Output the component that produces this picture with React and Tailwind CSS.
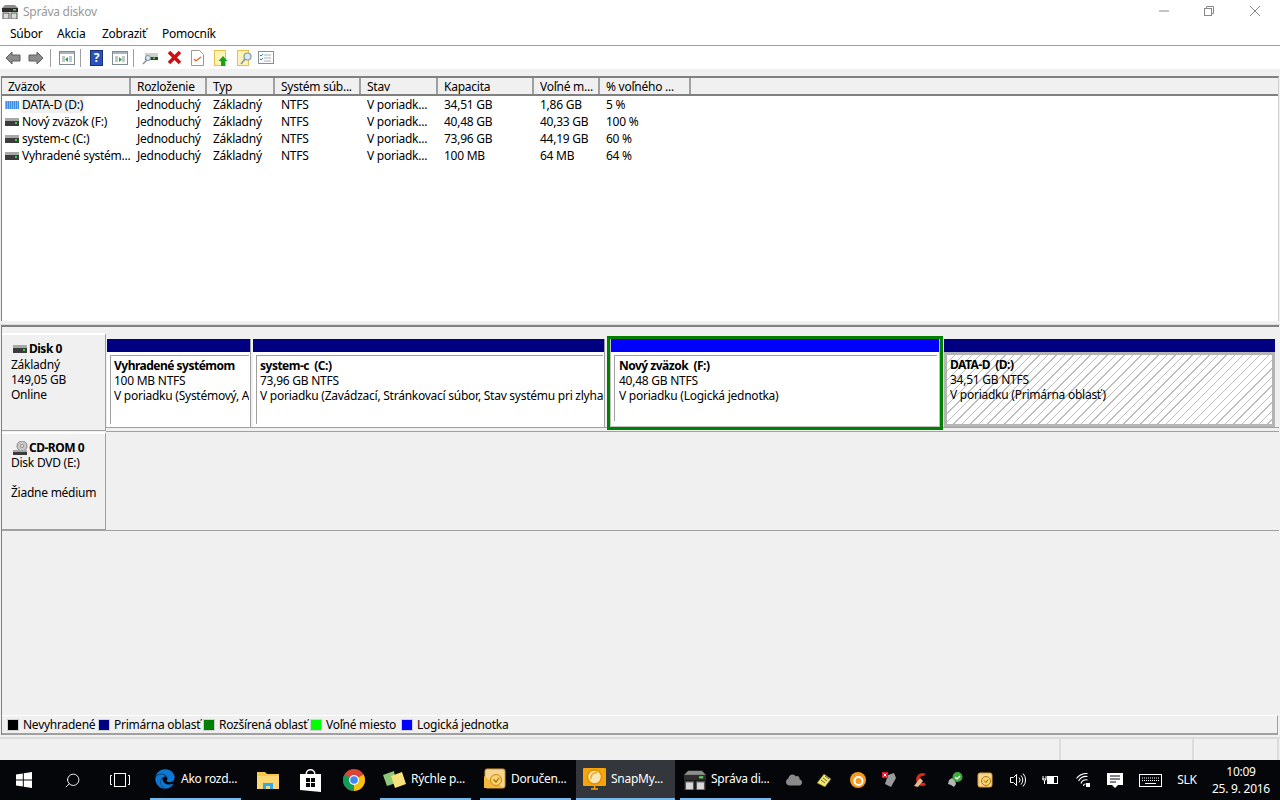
import React from 'react';
import { FaEdge, FaCloud } from 'react-icons/fa';
import { Search } from 'lucide-react';

const COLS = [
  { label: 'Zväzok', w: 'w-[129px]' },
  { label: 'Rozloženie', w: 'w-[76px]' },
  { label: 'Typ', w: 'w-[68px]' },
  { label: 'Systém súb...', w: 'w-[86px]' },
  { label: 'Stav', w: 'w-[77px]' },
  { label: 'Kapacita', w: 'w-[96px]' },
  { label: 'Voľné m...', w: 'w-[66px]' },
  { label: '% voľného ...', w: 'w-[91px]' },
];

const ROWS = [
  ['DATA-D (D:)', 'Jednoduchý', 'Základný', 'NTFS', 'V poriadk...', '34,51 GB', '1,86 GB', '5 %'],
  ['Nový zväzok (F:)', 'Jednoduchý', 'Základný', 'NTFS', 'V poriadk...', '40,48 GB', '40,33 GB', '100 %'],
  ['system-c (C:)', 'Jednoduchý', 'Základný', 'NTFS', 'V poriadk...', '73,96 GB', '44,19 GB', '60 %'],
  ['Vyhradené systém...', 'Jednoduchý', 'Základný', 'NTFS', 'V poriadk...', '100 MB', '64 MB', '64 %'],
];

const LEGEND = [
  { color: 'bg-black', label: 'Nevyhradené', w: 'w-[91px]' },
  { color: 'bg-[#000080]', label: 'Primárna oblasť', w: 'w-[105px]' },
  { color: 'bg-[#008000]', label: 'Rozšírená oblasť', w: 'w-[107px]' },
  { color: 'bg-[#00ff00]', label: 'Voľné miesto', w: 'w-[91px]' },
  { color: 'bg-[#0000ff]', label: 'Logická jednotka', w: 'w-[120px]' },
];

function DriveIcon({ blue }) {
  return (
    <svg width="14" height="8" viewBox="0 0 14 8" className="shrink-0">
      {blue ? (
        <>
          <rect x="0" y="0" width="14" height="8" fill="#3f8fe0" />
          <path d="M0 1h14M0 3h14M0 5h14M0 7h14" stroke="#bfe0ff" strokeDasharray="1 1" />
        </>
      ) : (
        <>
          <rect x="0" y="0" width="14" height="3" fill="#a8a8a8" />
          <rect x="0" y="3" width="14" height="5" fill="#3c3c3c" />
          <rect x="10" y="4" width="2" height="2" fill="#35d04a" />
        </>
      )}
    </svg>
  );
}

function AppDriveIcon({ size = 16 }) {
  return (
    <svg width={size} height={size} viewBox="0 0 16 16">
      <path d="M0 5 3 2h10l3 3v3H0z" fill="#8d8d8d" />
      <rect x="0" y="5" width="16" height="4" fill="#2d2d2d" />
      <rect x="11" y="6" width="3" height="1.5" fill="#55e05a" />
      <rect x="1" y="10" width="6" height="6" fill="#d9d9d9" stroke="#555" />
      <rect x="9" y="10" width="6" height="6" fill="#d9d9d9" stroke="#555" />
    </svg>
  );
}

function Arrow({ flip }) {
  return (
    <svg width="16" height="14" viewBox="0 0 16 14" className={flip ? 'scale-x-[-1]' : ''}>
      <path d="M7 1 1 7l6 6V10h8V4H7z" fill="#8c8c8c" stroke="#5c5c5c" />
    </svg>
  );
}

function PaneIcon({ right }) {
  return (
    <svg width="16" height="14" viewBox="0 0 16 14">
      <rect x="0.5" y="0.5" width="15" height="13" fill="#fff" stroke="#7f8a93" />
      <rect x="1" y="1" width="14" height="2" fill="#a9b4bd" />
      <path d="M3 6h3M3 8h3M3 10h3M10 6h3M10 8h3M10 10h3" stroke="#7f93a3" />
      {right ? <path d="M7 6v5l3-2.5z" fill="#2da52d" /> : <path d="M9 6v5L6 8.500z" fill="#2da52d" />}
    </svg>
  );
}

function Toolbar() {
  const Sep = () => <div className="w-px h-[18px] bg-[#a0a0a0]" />;
  return (
    <div className="h-[23px] bg-white flex items-center pl-[5px]">
      <Arrow />
      <div className="w-[7px]" />
      <Arrow flip />
      <div className="w-[6px]" />
      <Sep />
      <div className="w-[8px]" />
      <PaneIcon />
      <div className="w-[5px]" />
      <Sep />
      <div className="w-[9px]" />
      <div className="w-[13px] h-[16px] bg-[#2a52be] border border-[#1a2f70] flex items-center justify-center text-white text-[12px] font-bold leading-none">?</div>
      <div className="w-[9px]" />
      <PaneIcon right />
      <div className="w-[5px]" />
      <Sep />
      <div className="w-[8px]" />
      <svg width="16" height="14" viewBox="0 0 16 14">
        <path d="M1 13 6 8" stroke="#8a8a8a" strokeWidth="1.500" />
        <rect x="3" y="2" width="13" height="4" fill="#cfcfcf" />
        <rect x="3" y="6" width="13" height="3" fill="#3a3a3a" />
        <rect x="11" y="6.500" width="2" height="1.500" fill="#45e04a" />
        <circle cx="6" cy="7" r="2.500" fill="#dbe9f2" stroke="#8296a5" />
      </svg>
      <div className="w-[9px]" />
      <svg width="15" height="15" viewBox="0 0 15 15">
        <path d="M2 2 13 13M13 2 2 13" stroke="#d01010" strokeWidth="3.600" />
      </svg>
      <div className="w-[9px]" />
      <svg width="13" height="16" viewBox="0 0 13 16">
        <path d="M.5.500h8l4 4v11H.5z" fill="#fff" stroke="#9a9a9a" />
        <path d="M3 9l2 2 5-4" fill="none" stroke="#e8622c" strokeWidth="1.300" />
      </svg>
      <div className="w-[10px]" />
      <svg width="16" height="16" viewBox="0 0 16 16">
        <rect x="0.500" y="0.500" width="11" height="15" fill="#fdf3b8" stroke="#e5c34a" />
        <path d="M9 6l4.500 5H11v5H7v-5H4.500z" fill="#19a319" />
      </svg>
      <div className="w-[7px]" />
      <svg width="16" height="16" viewBox="0 0 16 16">
        <rect x="0.500" y="0.500" width="11" height="15" fill="#fdf3b8" stroke="#e5c34a" />
        <circle cx="10.500" cy="6.500" r="3.500" fill="#dbe9f2" stroke="#8296a5" strokeWidth="1.200" />
        <path d="M8 9 4 14" stroke="#8296a5" strokeWidth="1.600" />
      </svg>
      <div className="w-[5px]" />
      <svg width="16" height="13" viewBox="0 0 16 13">
        <rect x="0.500" y="0.500" width="15" height="12" fill="#fff" stroke="#8a8f94" />
        <path d="M6 4h7M6 7h7M6 10h7" stroke="#aab0b5" />
        <path d="M2 4l1 1 2-2M2 8l1 1 2-2" fill="none" stroke="#2f7fd0" />
      </svg>
    </div>
  );
}

function VolumeTable() {
  return (
    <div className="mx-[1px] h-[245px] bg-white border-t-2 border-t-[#808080] border-l border-l-[#808080] border-r border-r-[#d0d0d0] flex flex-col">
      <div className="h-[18px] flex bg-[#f0f0f0] border-b-2 border-b-[#808080] shrink-0">
        {COLS.map(c => (
          <div key={c.label} className={`${c.w} shrink-0 pl-[6px] border-r-2 border-r-[#a0a0a0] leading-[18px] whitespace-nowrap`}>
            {c.label}
          </div>
        ))}
        <div className="flex-1" />
      </div>
      {ROWS.map((r, i) => (
        <div key={r[0]} className="h-[17px] flex leading-[17px] shrink-0">
          {r.map((cell, j) => (
            <div key={j} className={`${COLS[j].w} shrink-0 whitespace-nowrap ${j === 0 ? 'pl-[3px] flex items-center gap-[2px]' : 'pl-[6px]'}`}>
              {j === 0 ? (
                <>
                  <DriveIcon blue={i === 0} />
                  <span className={i === 0 ? 'bg-[#f0f0f0] px-[1px]' : 'px-[1px]'}>{cell}</span>
                </>
              ) : cell}
            </div>
          ))}
        </div>
      ))}
    </div>
  );
}

function DiskLabel({ children, h }) {
  return (
    <div className={`w-[104px] ${h} shrink-0 bg-[#f0f0f0] border-t-2 border-t-white border-r border-r-[#a0a0a0] border-b border-b-[#a0a0a0] pl-[9px] leading-[15px]`}>
      {children}
    </div>
  );
}

function PartText({ title, size, status }) {
  return (
    <div className="pt-[2px] whitespace-pre overflow-hidden leading-[15px]">
      <div className="font-bold tracking-[-0.5px]">{title}</div>
      <div>{size}</div>
      <div>{status}</div>
    </div>
  );
}

function Partition({ w, title, size, status }) {
  return (
    <div className={`${w} shrink-0 flex flex-col border-r border-r-[#a0a0a0] mr-[2px] h-[88px]`}>
      <div className="h-[13px] bg-[#000080] shrink-0" />
      <div className="flex-1 min-h-0 bg-white pt-[3px] pl-[3px] pr-[1px] pb-[3px]">
        <div className="h-full border-t border-l border-[#a0a0a0] pl-[3px]">
          <PartText title={title} size={size} status={status} />
        </div>
      </div>
    </div>
  );
}

function DiskRow() {
  return (
    <div className="flex items-start h-[89px] mt-[9px] pl-[1px] border-b border-b-[#a0a0a0]">
      <Partition w="w-[144px]" title="Vyhradené systémom" size="100 MB NTFS" status="V poriadku (Systémový, A" />
      <Partition w="w-[352px]" title="system-c  (C:)" size="73,96 GB NTFS" status="V poriadku (Zavádzací, Stránkovací súbor, Stav systému pri zlyha" />
      <div className="w-[336px] h-[94px] -mt-[3px] shrink-0 border-[3px] border-[#008000] relative">
        <div className="h-full flex flex-col border-x border-b border-[#c0c0c0]">
          <div className="h-[13px] bg-[#0000ff] shrink-0" />
          <div className="flex-1 min-h-0 bg-white pt-[3px] pl-[3px] pr-[2px] pb-[5px]">
            <div className="h-full border-t border-l border-[#a0a0a0] pl-[4px]">
              <PartText title="Nový zväzok  (F:)" size="40,48 GB NTFS" status="V poriadku (Logická jednotka)" />
            </div>
          </div>
        </div>
      </div>
      <div className="w-[331px] ml-[1px] h-[88px] shrink-0 flex flex-col">
        <div className="h-[13px] bg-[#000080] shrink-0" />
        <div className="flex-1 min-h-0 bg-[#b4b4b4] p-[3px]">
          <div className="h-full pl-[3px] bg-[repeating-linear-gradient(135deg,#ffffff_0px,#ffffff_5px,#bdbdbd_5px,#bdbdbd_6px)]">
            <PartText title="DATA-D  (D:)" size="34,51 GB NTFS" status="V poriadku (Primárna oblasť)" />
          </div>
        </div>
      </div>
    </div>
  );
}

function DiskPane() {
  return (
    <div className="flex-1 mx-[1px] flex flex-col border-l border-l-[#808080] border-t-2 border-t-[#808080] min-h-0">
      <div className="flex h-[102px] mt-[3px]">
        <div className="pt-[3px]">
          <DiskLabel h="h-[98px]">
            <div className="flex items-center gap-[2px] font-bold tracking-[-0.5px] h-[17px] mt-[5px] ml-[2px]">
              <DriveIcon />
              Disk 0
            </div>
            <div>Základný</div>
            <div>149,05 GB</div>
            <div>Online</div>
          </DiskLabel>
        </div>
        <div className="flex-1 border-b border-b-[#a0a0a0] h-[102px]">
          <DiskRow />
        </div>
      </div>
      <div className="flex h-[99px] border-b border-b-[#a0a0a0]">
        <DiskLabel h="h-[98px]">
          <div className="flex items-center gap-[1px] font-bold tracking-[-0.5px] h-[15px] mt-[6px] ml-[2px]">
            <svg width="15" height="14" viewBox="0 0 15 14">
              <circle cx="9" cy="5" r="5" fill="#c8c8c8" stroke="#8a8a8a" />
              <circle cx="9" cy="5" r="1.500" fill="#fff" stroke="#8a8a8a" />
              <rect x="0" y="9" width="14" height="2" fill="#a8a8a8" />
              <rect x="0" y="11" width="14" height="3" fill="#3c3c3c" />
            </svg>
            CD-ROM 0
          </div>
          <div>Disk DVD (E:)</div>
          <div className="h-[15px]" />
          <div>Žiadne médium</div>
        </DiskLabel>
      </div>
      <div className="flex-1" />
      <div className="h-[20px] mr-[1px] flex items-center pl-[5px] border-t border-t-white border-b-2 border-b-[#a0a0a0] border-r border-r-[#a0a0a0]">
        {LEGEND.map(l => (
          <div key={l.label} className={`${l.w} shrink-0 flex items-center gap-[3px] whitespace-nowrap`}>
            <div className={`w-[12px] h-[12px] ${l.color} border border-[#d0d0d0] shrink-0`} />
            <span className="pl-[1px]">{l.label}</span>
          </div>
        ))}
      </div>
    </div>
  );
}

function StatusBar() {
  return (
    <div className="h-[23px] mt-[2px] border-t-2 border-t-[#dcdcdc] flex justify-end">
      <div className="w-[133px] border-l-2 border-l-[#dcdcdc]" />
      <div className="w-[85px] border-l-2 border-l-[#dcdcdc]" />
      <div className="w-[3px] border-l-2 border-l-[#dcdcdc]" />
    </div>
  );
}

function AppButton({ w, ml, icon, label, active }) {
  return (
    <div className={`${w} ${ml} h-full shrink-0 flex items-center border-b-2 border-b-[#76b9ed] ${active ? 'bg-[#33363a]' : ''}`}>
      {icon}
      <span className="text-white whitespace-nowrap">{label}</span>
    </div>
  );
}

function Taskbar() {
  return (
    <div className="h-[40px] bg-[#05060a] flex text-white shrink-0">
      <div className="w-[48px] flex items-center justify-center">
        <svg width="16" height="16" viewBox="0 0 16 16" fill="#fff">
          <path d="M0 2.500 6.800 1.500v6H0zM7.800 1.300 16 0v7.500H7.800zM0 8.500h6.800v6L0 13.500zM7.800 8.500H16V16l-8.200-1.300z" />
        </svg>
      </div>
      <div className="w-[48px] flex items-center justify-center">
        <Search size={17} strokeWidth={1.300} className="scale-x-[-1]" />
      </div>
      <div className="w-[48px] flex items-center justify-center">
        <svg width="20" height="14" viewBox="0 0 20 14" fill="none" stroke="#fff">
          <rect x="4.500" y="0.500" width="11" height="13" />
          <path d="M2 2.500H.5v9H2M18 2.500h1.500v9H18" />
        </svg>
      </div>
      <AppButton
        w="w-[91px]"
        ml="ml-[6px]"
        icon={<div className="w-[31px] shrink-0 pl-[5px]"><FaEdge size={20} color="#0a78d4" /></div>}
        label="Ako rozd..."
      />
      <div className="w-[43px] ml-[5px] flex items-center justify-center">
        <svg width="22" height="18" viewBox="0 0 22 18">
          <path d="M0 1h8l2 2h12v15H0z" fill="#f3c64c" />
          <rect x="0" y="5" width="22" height="13" fill="#fad674" />
          <path d="M6 12h10v6h-3v-3H9v3H6z" fill="#28aef0" />
        </svg>
      </div>
      <div className="w-[43px] flex items-center justify-center">
        <svg width="21" height="23" viewBox="0 0 21 23" fill="#fff">
          <path d="M0 5h5.500a5 5 0 0 1 10 0H21v18L0 21z" />
          <path d="M7 5a3.500 3.500 0 0 1 7 0z" fill="#05060a" />
          <rect x="6" y="9" width="4" height="4" fill="#05060a" />
          <rect x="11" y="9" width="4" height="4" fill="#05060a" />
          <rect x="6" y="14" width="4" height="4" fill="#05060a" />
          <rect x="11" y="14" width="4" height="4" fill="#05060a" />
        </svg>
      </div>
      <div className="w-[43px] flex items-center justify-center">
        <svg width="22" height="22" viewBox="0 0 22 22">
          <circle cx="11" cy="11" r="11" fill="#db4437" />
          <path d="M11 11 20.500 5.500A11 11 0 0 1 11 22z" fill="#f4c20d" />
          <path d="M11 11 11 22A11 11 0 0 1 1.500 5.500z" fill="#0f9d58" />
          <circle cx="11" cy="11" r="5" fill="#fff" />
          <circle cx="11" cy="11" r="3.800" fill="#4285f4" />
        </svg>
      </div>
      <AppButton
        w="w-[91px]"
        ml="ml-[5px]"
        icon={
          <div className="w-[31px] shrink-0 pl-[3px]">
            <svg width="23" height="20" viewBox="0 0 23 20">
              <path d="M0 6 11 2l2 12-9 3z" fill="#8cc878" />
              <path d="M8 7 19 3l4 12-11 4z" fill="#f6e27a" />
            </svg>
          </div>
        }
        label="Rýchle p..."
      />
      <AppButton
        w="w-[91px]"
        ml="ml-[9px]"
        icon={
          <div className="w-[31px] shrink-0 pl-[3px]">
            <svg width="23" height="22" viewBox="0 0 23 22">
              <rect x="2" y="1" width="20" height="19" rx="2" fill="#f6d690" stroke="#d99a30" />
              <path d="M1 8l8 6-8 6zM1 20l8-6h4l8 6z" fill="#f5b83d" />
              <circle cx="13" cy="12" r="5.500" fill="#f9d46a" stroke="#c88418" />
              <path d="M10.500 11.500 13 14l3-4" fill="none" stroke="#a06810" strokeWidth="1.200" />
            </svg>
          </div>
        }
        label="Doručen..."
      />
      <AppButton
        w="w-[99px]"
        ml="ml-[5px]"
        active
        icon={
          <div className="w-[35px] shrink-0 pl-[7px]">
            <svg width="23" height="22" viewBox="0 0 23 22">
              <rect x="0" y="0" width="23" height="18" rx="1" fill="#f5a40c" />
              <circle cx="11.500" cy="9" r="7" fill="#fbe7b5" stroke="#e49000" strokeWidth="1.500" />
              <path d="M8 11a5 5 0 0 1 6-6" fill="none" stroke="#f5a40c" strokeWidth="1.500" />
              <path d="M8 21h7M11.500 18v3" stroke="#f5a40c" strokeWidth="1.500" />
            </svg>
          </div>
        }
        label="SnapMy..."
      />
      <AppButton
        w="w-[91px]"
        ml="ml-[5px]"
        icon={<div className="w-[31px] shrink-0 pl-[4px]"><AppDriveIcon size={22} /></div>}
        label="Správa di..."
      />
      <div className="w-[8px]" />
      <div className="w-[30px] flex items-center justify-center"><FaCloud size={16} color="#8a8a8a" /></div>
      <div className="w-[30px] flex items-center justify-center">
        <svg width="16" height="14" viewBox="0 0 16 14">
          <path d="M1 10 8 1l7 5-6 8z" fill="#f5e663" stroke="#555" strokeWidth=".6" />
          <path d="M5 7l4 3M7 5l4 3M9 3l4 3" stroke="#444" strokeWidth=".8" />
        </svg>
      </div>
      <div className="w-[38px] flex items-center justify-center">
        <svg width="16" height="16" viewBox="0 0 16 16">
          <circle cx="8" cy="8" r="8" fill="#f59a1c" />
          <circle cx="8.500" cy="9" r="4" fill="none" stroke="#fff" strokeWidth="2" />
        </svg>
      </div>
      <div className="w-[24px] flex items-center justify-center">
        <svg width="14" height="16" viewBox="0 0 14 16">
          <path d="M6 3l6-2 2 5-5 9-6-3z" fill="#9a9a9a" />
          <rect x="0" y="0" width="6" height="6" fill="#e81123" />
          <path d="M1.500 1.500l3 3M4.500 1.500l-3 3" stroke="#fff" />
        </svg>
      </div>
      <div className="w-[40px] flex items-center justify-center">
        <svg width="16" height="16" viewBox="0 0 16 16">
          <path d="M10 1a6.500 6.500 0 1 0 3 12l-1.500-2.500a3.500 3.500 0 1 1-1-6.500L13 2z" fill="#d8281c" />
          <path d="M1 14 7 6l3 3-5 6z" fill="#e8b98a" />
        </svg>
      </div>
      <div className="w-[28px] flex items-center justify-center">
        <svg width="16" height="16" viewBox="0 0 16 16">
          <path d="M2 8l3-2 3 2 1 4-2 3-3-2-3-1z" fill="#b5b5b5" />
          <circle cx="10.500" cy="5" r="5" fill="#3fa83f" />
          <path d="M8 5l2 2 3-3" fill="none" stroke="#fff" strokeWidth="1.300" />
        </svg>
      </div>
      <div className="w-[32px] flex items-center justify-center">
        <svg width="16" height="16" viewBox="0 0 16 16">
          <rect x="1" y="1" width="14" height="14" rx="2" fill="#f6d690" stroke="#d99a30" />
          <circle cx="9" cy="9" r="4.500" fill="#f9d46a" stroke="#b57a10" />
          <path d="M7 8.500 9 10.500l2-3" fill="none" stroke="#8a5c10" />
        </svg>
      </div>
      <div className="w-[34px] flex items-center justify-center">
        <svg width="16" height="14" viewBox="0 0 16 14" fill="none" stroke="#fff">
          <path d="M.5 4.500h3l3-3v11l-3-3h-3z" />
          <path d="M9 4.500a3.500 3.500 0 0 1 0 5M11 2.500a6.500 6.500 0 0 1 0 9M13 .5a9.500 9.500 0 0 1 0 13" />
        </svg>
      </div>
      <div className="w-[30px] flex items-center justify-center">
        <svg width="16" height="12" viewBox="0 0 16 12" fill="none" stroke="#fff">
          <rect x="5.500" y="2.500" width="10" height="7" />
          <rect x="6.500" y="3.500" width="5" height="5" fill="#fff" />
          <path d="M0 5h4M1 2v3a1.500 1.500 0 0 0 3 0V2M2.500 7v3" />
        </svg>
      </div>
      <div className="w-[36px] flex items-center justify-center">
        <svg width="14" height="14" viewBox="0 0 14 14" fill="none" stroke="#fff">
          <path d="M.5 5.500a13 13 0 0 1 11 -5M2.500 8a9 9 0 0 1 9 -4.500M5 10.500a5 5 0 0 1 6.500 -3.500M7.500 13a2 2 0 0 1 2 -2" strokeWidth="1.100" />
          <rect x="10" y="10" width="4" height="4" fill="#fff" stroke="none" />
        </svg>
      </div>
      <div className="w-[28px] flex items-center justify-center">
        <svg width="16" height="15" viewBox="0 0 16 15">
          <path d="M0 0h16v12h-5l-3 3-3-3H0z" fill="#fff" />
          <path d="M3 3h10M3 6h10M3 9h6" stroke="#05060a" />
        </svg>
      </div>
      <div className="w-[42px] flex items-center justify-center">
        <svg width="23" height="13" viewBox="0 0 23 13" fill="none" stroke="#fff">
          <rect x="0.500" y="0.500" width="22" height="12" />
          <path d="M3 4h17M3 6.500h17" strokeDasharray="1 1" />
          <path d="M6 9.500h11" />
        </svg>
      </div>
      <div className="w-[32px] flex items-center justify-center">SLK</div>
      <div className="w-[76px] flex flex-col items-center justify-center leading-[17px]">
        <div>10:09</div>
        <div>25. 9. 2016</div>
      </div>
    </div>
  );
}

export default function App() {
  return (
    <div className="w-[1280px] h-[800px] overflow-hidden flex flex-col bg-[#f0f0f0] text-[12px] tracking-[-0.25px] text-black font-['Noto_Sans','Open_Sans',sans-serif]">
      <div className="h-[22px] bg-white flex items-center pl-[2px] shrink-0">
        <AppDriveIcon />
        <span className="ml-[5px] pt-[1px] text-[#999999]">Správa diskov</span>
        <div className="ml-auto flex items-center">
          <svg width="10" height="10" viewBox="0 0 10 10"><path d="M0 5h10" stroke="#8a8a8a" /></svg>
          <div className="w-[35px]" />
          <svg width="10" height="10" viewBox="0 0 10 10" fill="none" stroke="#8a8a8a">
            <rect x="0.500" y="2.500" width="7" height="7" />
            <path d="M2.500 2.500v-2h7v7h-2" />
          </svg>
          <div className="w-[36px]" />
          <svg width="10" height="10" viewBox="0 0 10 10"><path d="M0 0l10 10M10 0 0 10" stroke="#8a8a8a" /></svg>
          <div className="w-[20px]" />
        </div>
      </div>
      <div className="h-[24px] bg-white flex items-center pl-[10px] border-b border-b-[#a0a0a0] shrink-0">
        <span className="w-[47px]">Súbor</span>
        <span className="w-[45px]">Akcia</span>
        <span className="w-[60px]">Zobraziť</span>
        <span>Pomocník</span>
      </div>
      <Toolbar />
      <div className="h-[7px] shrink-0" />
      <VolumeTable />
      <div className="h-[4px] shrink-0 border-b border-b-[#dcdcdc]" />
      <DiskPane />
      <StatusBar />
      <Taskbar />
    </div>
  );
}
